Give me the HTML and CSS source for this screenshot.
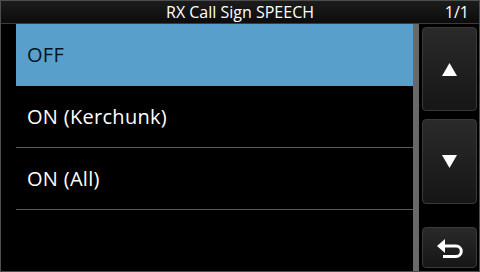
FILE: index.html
```html
<!DOCTYPE html>
<html lang="en">
<head>
    <meta charset="UTF-8">
    <meta name="viewport" content="width=device-width, initial-scale=1.0">
    <title>RX Call Sign SPEECH</title>
    <link rel="stylesheet" href="styles.css">
</head>
<body>
    <div class="screen">
        <div class="titlebar">
            <span class="title">RX Call Sign SPEECH</span>
            <span class="page">1/1</span>
        </div>
        <div class="main">
            <div class="list">
                <div class="item selected">OFF</div>
                <div class="item">ON (Kerchunk)</div>
                <div class="item">ON (All)</div>
            </div>
            <div class="scrollbar"></div>
            <div class="buttons">
                <div class="btn btn-up">
                    <svg width="15" height="13" viewBox="0 0 15 13"><polygon points="7.5,0 15,13 0,13" fill="#fff"/></svg>
                </div>
                <div class="btn btn-down">
                    <svg width="15" height="13" viewBox="0 0 15 13"><polygon points="0,0 15,0 7.5,13" fill="#fff"/></svg>
                </div>
                <div class="btn btn-back">
                    <svg width="26" height="20" viewBox="0 0 26 20">
                        <polygon points="0,8 8,1 8,15" fill="#fff"/>
                        <path d="M7 8 H19 A5.25 5.25 0 0 1 19 18.5 H6" fill="none" stroke="#fff" stroke-width="3"/>
                    </svg>
                </div>
            </div>
        </div>
    </div>
</body>
</html>
```

FILE: styles.css
```css
body {
    margin: 0;
    background: #000;
    font-family: "Open Sans", "Noto Sans", sans-serif;
}
.screen {
    width: 480px;
    height: 272px;
    box-sizing: border-box;
    border: 1px solid #4e4e4e;
    background: #000;
    display: flex;
    flex-direction: column;
    overflow: hidden;
}
.titlebar {
    height: 22px;
    border-bottom: 1px solid #3c3c3c;
    background: linear-gradient(#1c1c1c, #0c0c0c);
    color: #fff;
    position: relative;
    display: flex;
    justify-content: center;
    align-items: center;
}
.title {
    font-size: 16px;
}
.page {
    position: absolute;
    right: 10px;
    top: 0;
    line-height: 22px;
    font-size: 16px;
}
.main {
    flex: 1;
    display: flex;
}
.list {
    width: 397px;
    margin-left: 15px;
}
.item {
    height: 62px;
    box-sizing: border-box;
    border-bottom: 1px solid #5a5a5a;
    display: flex;
    align-items: center;
    padding-left: 11px;
    color: #fff;
    font-size: 20px;
    letter-spacing: 0.3px;
}
.item.selected {
    background: #58a0cb;
    border-bottom-color: #58a0cb;
    color: #08131c;
}
.scrollbar {
    width: 6px;
    background: #686868;
}
.buttons {
    width: 55px;
    margin-left: 3px;
    padding-top: 3px;
    display: flex;
    flex-direction: column;
}
.btn {
    box-sizing: border-box;
    border: 1px solid #3a3a3a;
    border-radius: 4px;
    background: linear-gradient(#2a2a2a, #161616);
    display: flex;
    justify-content: center;
    align-items: center;
}
.btn-up {
    height: 84px;
}
.btn-down {
    height: 85px;
    margin-top: 8px;
}
.btn-back {
    height: 41px;
    margin-top: 23px;
}
.btn-back svg {
    margin-left: 1px;
}
```
